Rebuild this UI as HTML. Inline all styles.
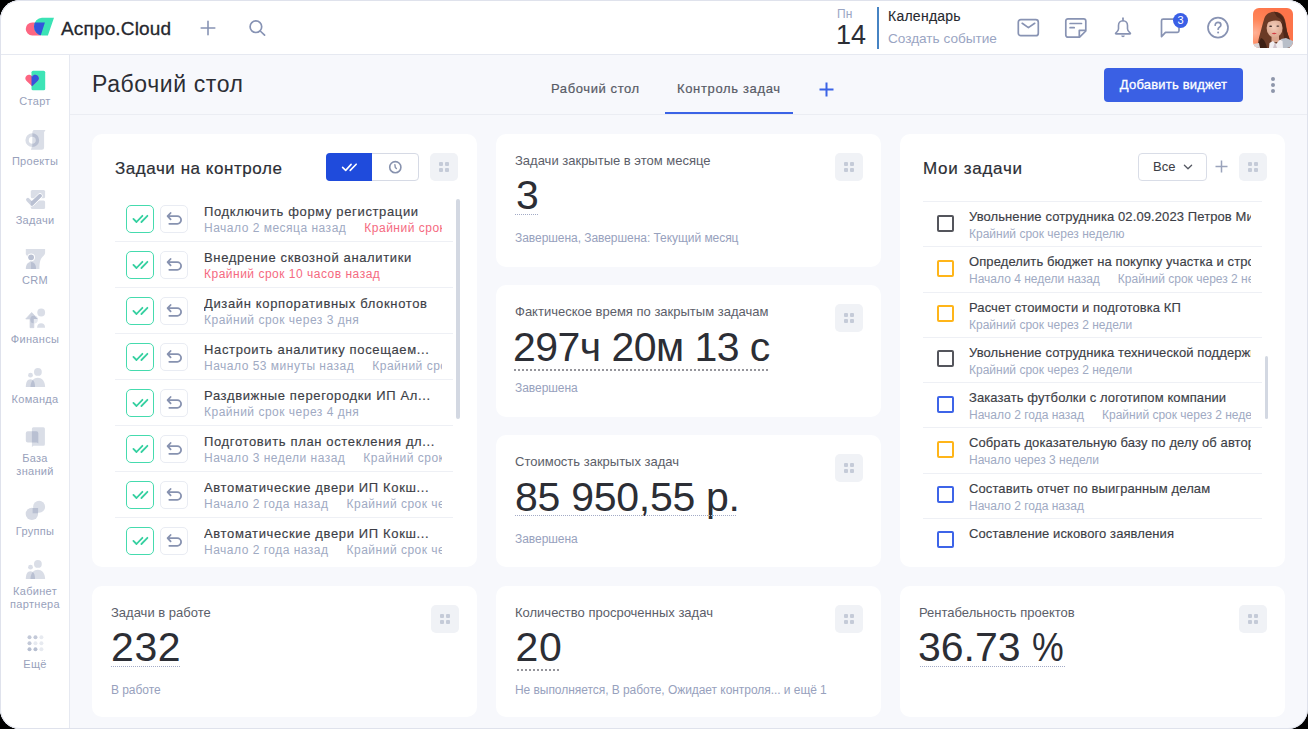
<!DOCTYPE html>
<html><head><meta charset="utf-8"><title>Аспро.Cloud</title><style>
*{box-sizing:border-box;margin:0;padding:0}
html,body{width:1308px;height:729px;overflow:hidden;background:#000;font-family:"Liberation Sans", sans-serif}
.win{position:absolute;left:0;top:0;width:1308px;height:729px;border-radius:20px;overflow:hidden;background:#f7f8fc}
.frame{position:absolute;left:0;top:0;width:1308px;height:729px;border-radius:20px;border:1px solid #dfe2ec;pointer-events:none;z-index:50}
.a{position:absolute;white-space:nowrap}
.hdr{position:absolute;left:0;top:0;width:1308px;height:55px;background:#fff;border-bottom:1px solid #e6e9f1}
.side{position:absolute;left:0;top:55px;width:70px;height:674px;background:#fff;border-right:1px solid #e6e9f1}
.sl{position:absolute;left:0.5px;width:69px;text-align:center;letter-spacing:0.3px;font-size:11px;line-height:14px;color:#98a1bb}
.card{position:absolute;background:#fff;border-radius:10px}
.hd{position:absolute;width:28px;height:28px;border-radius:5px;background:#f0f2f6}
.hd i{position:absolute;width:4px;height:4px;border-radius:1px;background:#c5cbd8}
.ctitle{font-size:13px;color:#5b5e69;line-height:16px}
.big{font-size:41px;color:#2c2e35;line-height:44px}
.dotl{position:absolute;height:1px;background:repeating-linear-gradient(90deg,#a3abc6 0 1px,transparent 1px 2px)}
.dotd{position:absolute;height:2px;background:repeating-linear-gradient(90deg,#96969c 0 2px,transparent 2px 4px)}
.csub{font-size:12px;color:#97a1bd;line-height:15px;letter-spacing:-0.05px}
.row{position:absolute;left:115px;width:338px;height:46px;border-bottom:1px solid #eef0f5}
.bok{position:absolute;left:11px;top:9px;width:28px;height:28px;border:1.5px solid #45dbae;border-radius:5px}
.bun{position:absolute;left:45px;top:9px;width:28px;height:28px;border:1px solid #e9ecf3;border-radius:5px}
.tt{position:absolute;left:89px;top:7.6px;width:240px;overflow:hidden;font-size:13px;letter-spacing:0.64px;line-height:16px;color:#3c3e46;-webkit-text-stroke:0.15px #3c3e46}
.ts{position:absolute;left:89px;top:25px;width:238px;overflow:hidden;font-size:12px;letter-spacing:0.5px;line-height:15px;color:#a0aac3}
.red{color:#f56a81}
.mrow{position:absolute;left:923px;width:339px;height:45.5px;border-top:1px solid #eef0f5}
.cb{position:absolute;left:13.5px;top:12.6px;width:17px;height:17px;border:2px solid #54555c;border-radius:2px}
.mt{position:absolute;left:46px;top:7px;width:282px;overflow:hidden;font-size:13px;letter-spacing:0.1px;line-height:16px;color:#3c3e46;-webkit-text-stroke:0.15px #3c3e46}
.ms{position:absolute;left:46px;top:25px;width:282px;overflow:hidden;font-size:12px;line-height:15px;color:#a0aac3}
</style></head>
<body>
<div class="win">
<div class="hdr"></div>
<svg class="a" style="left:22px;top:14px" width="36" height="26" viewBox="0 0 36 26">
<defs><clipPath id="lg"><path d="M20 3.75 H32 L25.9 21.4 H20 A8 8.825 0 0 1 20 3.75Z"/></clipPath></defs>
<path d="M10.25 8.4 H22.9 L18.75 21.4 H10.25 A6.5 6.5 0 0 1 10.25 8.4Z" fill="#fd6682"/>
<path d="M20 3.75 H32 L25.9 21.4 H20 A8 8.825 0 0 1 20 3.75Z" fill="#3be3b5"/>
<path d="M10.25 8.4 H22.9 L18.75 21.4 H10.25 A6.5 6.5 0 0 1 10.25 8.4Z" fill="#3355dc" clip-path="url(#lg)"/>
</svg>
<div class="a" style="left:61px;top:18px;font-size:19px;line-height:22px;letter-spacing:0.15px;color:#26282e;-webkit-text-stroke:0.3px #26282e">Аспро.Cloud</div>
<svg class="a" style="left:200px;top:20px" width="16" height="16" viewBox="0 0 16 16"><path d="M8 1.2V14.8M1.2 8H14.8" stroke="#8793b4" stroke-width="1.6" stroke-linecap="round"/></svg>
<svg class="a" style="left:247px;top:18px" width="20" height="20" viewBox="0 0 20 20"><circle cx="8.9" cy="8.7" r="5.8" fill="none" stroke="#8793b4" stroke-width="1.7"/><path d="M13.2 13 L17.6 17.2" stroke="#8793b4" stroke-width="1.7" stroke-linecap="round"/></svg>
<div class="a" style="left:837px;top:6.5px;font-size:12px;line-height:14px;color:#9aa5c3">Пн</div>
<div class="a" style="left:836px;top:19.2px;font-size:27px;line-height:32px;color:#2c2e35">14</div>
<div class="a" style="left:877px;top:7px;width:2px;height:41.5px;background:#4683c3"></div>
<div class="a" style="left:888px;top:8.4px;font-size:14px;line-height:17px;letter-spacing:0.25px;color:#26282e;-webkit-text-stroke:0.1px #26282e">Календарь</div>
<div class="a" style="left:888px;top:29.6px;font-size:13.6px;line-height:17px;color:#9aa5c3">Создать событие</div>
<svg class="a" style="left:1016px;top:17px" width="24" height="21" viewBox="0 0 24 21"><rect x="2.3" y="2.7" width="20" height="16" rx="2.5" fill="none" stroke="#8893b3" stroke-width="1.7"/><path d="M6.2 6.3 L12.4 10.6 L18.7 6.3" fill="none" stroke="#8893b3" stroke-width="1.7" stroke-linecap="round" stroke-linejoin="round"/></svg>
<svg class="a" style="left:1064px;top:17px" width="24" height="22" viewBox="0 0 24 22"><path d="M15.6 20.2 H4 A2.2 2.2 0 0 1 1.8 18 V4 A2.2 2.2 0 0 1 4 1.8 H19.6 A2.2 2.2 0 0 1 21.8 4 V14 Z" fill="none" stroke="#8893b3" stroke-width="1.7" stroke-linejoin="round"/><path d="M15.3 20 V13.4 H21.6" fill="none" stroke="#8893b3" stroke-width="1.7" stroke-linejoin="round"/><path d="M6.1 6.5 H17.5 M6.1 10.7 H10.2" stroke="#8893b3" stroke-width="1.7" stroke-linecap="round"/></svg>
<svg class="a" style="left:1113px;top:16px" width="20" height="24" viewBox="0 0 20 24"><path d="M10 4.8 C7.3 4.8 5.5 6.8 5.5 9.4 V12.8 C5.5 14 4.8 15 4 15.8 L2.8 17 C2.3 17.5 2.6 17.9 3.2 17.9 H16.8 C17.4 17.9 17.7 17.5 17.2 17 L16 15.8 C15.2 15 14.5 14 14.5 12.8 V9.4 C14.5 6.8 12.7 4.8 10 4.8Z" fill="none" stroke="#8893b3" stroke-width="1.6" stroke-linejoin="round"/><path d="M10 2.2 V4.6" stroke="#8893b3" stroke-width="1.7" stroke-linecap="round"/><path d="M8.2 19.4 A1.8 1.8 0 0 0 11.8 19.4Z" fill="#8893b3"/></svg>
<svg class="a" style="left:1158px;top:16px" width="26" height="24" viewBox="0 0 26 24"><path d="M3.5 20.6 V4.8 Q3.5 3.2 5.1 3.2 H21 V14.8 Q21 16.4 19.4 16.4 H7.5 Z" fill="none" stroke="#8893b3" stroke-width="1.7" stroke-linejoin="round"/></svg>
<div class="a" style="left:1173px;top:12.5px;width:15px;height:15px;border-radius:8px;background:#3a5fe6;color:#fff;font-size:11px;line-height:15px;text-align:center">3</div>
<svg class="a" style="left:1206px;top:16px" width="24" height="24" viewBox="0 0 24 24"><circle cx="12" cy="11.6" r="10" fill="none" stroke="#8893b3" stroke-width="1.7"/><path d="M9.2 9.2 C9.2 7.4 10.4 6.4 12 6.4 C13.7 6.4 14.9 7.5 14.9 9 C14.9 11 12.1 11.2 12.1 13.2" fill="none" stroke="#8893b3" stroke-width="1.7" stroke-linecap="round"/><circle cx="12.1" cy="16.6" r="1" fill="#8893b3"/></svg>
<svg class="a" style="left:1253px;top:8px" width="40" height="40" viewBox="0 0 40 40">
<defs><clipPath id="av"><rect width="40" height="40" rx="6"/></clipPath>
<radialGradient id="ag" cx="0.05" cy="0.62" r="0.75"><stop offset="0" stop-color="#ffb095"/><stop offset="0.45" stop-color="#ff8558"/><stop offset="1" stop-color="#fd744a"/></radialGradient>
<radialGradient id="sk" cx="0.45" cy="0.45" r="0.6"><stop offset="0" stop-color="#f3cdbb"/><stop offset="1" stop-color="#d9a48c"/></radialGradient></defs>
<g clip-path="url(#av)">
<rect width="40" height="40" fill="url(#ag)"/>
<path d="M21 3.8 C15 3.8 12 7.5 11 11.5 C9.5 16 8.5 21 7 26 C5.5 31 4.5 36 5 40 H38 C38 35 37 31 35 27 C33.5 23 33.5 17 32 12 C30.5 7 27 3.8 21 3.8Z" fill="#6b3a26"/>
<path d="M21 3.8 C25 4 29 6.5 31 11 C33 16 33 22 35.5 28 C37 32 38 36 38 40 H31 C32 33 31 26 29 20 C27.5 14 24 9 21 3.8Z" fill="#4e2719"/>
<path d="M8 30 C6 33 5 37 5.5 40 H14 C13 35 11 31 8 30Z" fill="#3d1f14"/>
<path d="M28 31 L33 30 L40 33 V40 H29Z" fill="#b9bfc9"/>
<path d="M18.5 27 H26 V34 H18.5Z" fill="#d9a48c"/><path d="M16.5 35 L20 33 L23 36 L27 31.5 L29.5 33 L30 40 H16Z" fill="#f1eef1"/>
<path d="M22 34 L24 40 H20Z" fill="#cfc3cc"/>
<path d="M0 36 L6 35 L7 40 H0Z" fill="#d9d4d6"/>
<ellipse cx="21.6" cy="20" rx="8" ry="9.6" fill="url(#sk)"/>
<path d="M14 14.5 C15.5 9.5 20 8 24 9 C27 10 29 12 30 15 C27 12 21 11.5 14 14.5Z" fill="#6b3a26"/>
<ellipse cx="17.6" cy="18.3" rx="1.5" ry="0.7" fill="#3a2a28"/>
<ellipse cx="24.8" cy="18.1" rx="1.5" ry="0.7" fill="#3a2a28"/>
<path d="M18.6 25.2 Q21.2 24.4 23.8 25.2 Q21.2 27.2 18.6 25.2Z" fill="#d43a43"/>
</g></svg>
<div class="side"></div>
<div class="sl" style="top:93.9px;line-height:14px">Старт</div>
<div class="sl" style="top:153.7px;line-height:14px">Проекты</div>
<div class="sl" style="top:213.3px;line-height:14px">Задачи</div>
<div class="sl" style="top:272.9px;line-height:14px">CRM</div>
<div class="sl" style="top:332.3px;line-height:14px">Финансы</div>
<div class="sl" style="top:391.6px;line-height:14px">Команда</div>
<div class="sl" style="top:451.8px;line-height:13.5px">База<br>знаний</div>
<div class="sl" style="top:524.4px;line-height:14px">Группы</div>
<div class="sl" style="top:584.6px;line-height:13.5px">Кабинет<br>партнера</div>
<div class="sl" style="top:656.9px;line-height:14px">Ещё</div>
<svg class="a" style="left:24px;top:69px" width="24" height="24" viewBox="0 0 24 24">
<defs><clipPath id="sc"><rect x="7.5" y="0" width="16" height="24"/></clipPath></defs>
<rect x="7.5" y="1.7" width="13.7" height="19.6" rx="1.6" fill="#3de4b6"/>
<path d="M8.1 17.2 L2.35 11.85 A3.6 3.6 0 1 1 8.1 7.65 A3.6 3.6 0 1 1 13.85 11.85 Z" fill="#fd6682"/>
<path d="M8.1 17.2 L2.35 11.85 A3.6 3.6 0 1 1 8.1 7.65 A3.6 3.6 0 1 1 13.85 11.85 Z" fill="#3355dc" clip-path="url(#sc)"/>
</svg>
<svg class="a" style="left:24px;top:128px" width="24" height="24" viewBox="0 0 24 24">
<path d="M9.6 2.1 H21.5 L20.1 4.2 V19.2 Q20.1 21.7 17.6 21.7 H6.9 Q8.3 19 8.3 12.2 V5 Q8.3 3 9.6 2.1Z" fill="#dadee7"/>
<path d="M8.3 7 A5.2 5.2 0 0 0 8.3 17.4" fill="none" stroke="#dadee7" stroke-width="3.4"/>
<path d="M8.3 7 A5.2 5.2 0 0 1 8.3 17.4" fill="none" stroke="#b9c0d2" stroke-width="3.4"/>
</svg>
<svg class="a" style="left:24px;top:188px" width="24" height="24" viewBox="0 0 24 24">
<defs><clipPath id="tc"><rect x="6.8" y="0" width="16" height="24"/></clipPath></defs>
<rect x="6.8" y="1.9" width="14.3" height="8.3" rx="1.5" fill="#dadee7"/>
<rect x="6.8" y="12.6" width="14.3" height="8.3" rx="1.5" fill="#dadee7"/>
<path d="M3.9 11.7 L7.7 15.9 L16 7.8" fill="none" stroke="#fff" stroke-width="5.2" stroke-linecap="round" stroke-linejoin="round" clip-path="url(#tc)"/>
<path d="M3.9 11.7 L7.7 15.9 L16 7.8" fill="none" stroke="#cfd4e0" stroke-width="3.6" stroke-linecap="round" stroke-linejoin="round"/>
<path d="M3.9 11.7 L7.7 15.9 L16 7.8" fill="none" stroke="#b9c0d2" stroke-width="3.6" stroke-linecap="round" stroke-linejoin="round" clip-path="url(#tc)"/>
</svg>
<svg class="a" style="left:24px;top:247px" width="24" height="24" viewBox="0 0 24 24">
<defs><clipPath id="cc"><rect x="7" y="0" width="16" height="24"/></clipPath></defs>
<path d="M1.8 1.9 H21.1 V5.5 C21.1 8.5 17.5 10 16.5 13 C15.6 15.5 15.4 18.5 15.4 21.9 H6 V16 C6 12 3 9 1.8 7.2 Z" fill="#dadee7"/>
<circle cx="7.1" cy="10.3" r="3.9" fill="#fff"/>
<circle cx="7.1" cy="10.3" r="2.9" fill="#b9c0d2"/>
<path d="M1.8 21.9 C1.8 17.5 4 15.1 6.9 15.1 C9.8 15.1 12 17.5 12 21.9 Z" fill="#cfd4e0"/>
<path d="M1.8 21.9 C1.8 17.5 4 15.1 6.9 15.1 C9.8 15.1 12 17.5 12 21.9 Z" fill="#b9c0d2" clip-path="url(#cc)"/>
</svg>
<svg class="a" style="left:24px;top:306px" width="24" height="24" viewBox="0 0 24 24">
<defs><clipPath id="fc"><path d="M7.7 6.5 L1.8 12.9 H6.1 V21.7 H9.8 V12.9 H13.7 Z"/></clipPath></defs>
<circle cx="17.2" cy="6.5" r="3.9" fill="#dadee7"/>
<path d="M13.1 21.7 C13.1 18.5 14.8 17.2 17.1 17.2 C19.4 17.2 21.1 18.5 21.1 21.7Z" fill="#dadee7"/>
<path d="M7.7 6.5 L1.8 12.9 H6.1 V21.7 H9.8 V12.9 H13.7 Z" fill="#cfd4e0" stroke="#cfd4e0" stroke-width="0.8" stroke-linejoin="round"/>
<circle cx="10" cy="13.5" r="3.9" fill="#e6e9f0"/>
<circle cx="10" cy="13.5" r="3.9" fill="#b9c0d2" clip-path="url(#fc)"/>
</svg>
<svg class="a" style="left:24px;top:366px" width="24" height="24" viewBox="0 0 24 24">
<defs><clipPath id="t1c"><path d="M1.8 21.1 C1.8 16 3.5 13.3 6.4 13.3 C9.3 13.3 11 16 11 21.1Z"/></clipPath></defs>
<circle cx="13.9" cy="5.9" r="3.9" fill="#dadee7"/>
<circle cx="6.5" cy="9.2" r="2.4" fill="#dadee7"/>
<path d="M6.5 21.1 C6.5 15 10 11.8 13.8 11.8 C17.6 11.8 21.1 15 21.1 21.1Z" fill="#dadee7"/>
<path d="M1.8 21.1 C1.8 16 3.5 13.3 6.4 13.3 C9.3 13.3 11 16 11 21.1Z" fill="#d6dae4"/>
<path d="M6.5 21.1 C6.5 15 10 11.8 13.8 11.8 C17.6 11.8 21.1 15 21.1 21.1Z" fill="#b9c0d2" clip-path="url(#t1c)"/>
</svg>
<svg class="a" style="left:24px;top:425px" width="24" height="24" viewBox="0 0 24 24">
<path d="M9.4 2.3 H19.4 A1.5 1.5 0 0 1 20.9 3.8 V19.2 A1.5 1.5 0 0 1 19.4 20.7 H9.5 L7.9 22 V3.8 A1.5 1.5 0 0 1 9.4 2.3Z" fill="#dadee7"/>
<path d="M3.8 6.3 H12.3 A2 2 0 0 1 14.3 8.3 V18.6 L13 17.6 H3.8 A2 2 0 0 1 1.8 15.6 V8.3 A2 2 0 0 1 3.8 6.3Z" fill="#d6dae4"/>
<path d="M7.9 6.3 H12.3 A2 2 0 0 1 14.3 8.3 V18.6 L13 17.6 H7.9Z" fill="#b9c0d2"/>
</svg>
<svg class="a" style="left:24px;top:498px" width="24" height="24" viewBox="0 0 24 24">
<circle cx="15.1" cy="8.7" r="6" fill="#dadee7"/>
<circle cx="7.9" cy="15.9" r="6.2" fill="#d6dae4"/>
<rect x="8.6" y="10" width="5.5" height="5.3" fill="#b9c0d2"/>
</svg>
<svg class="a" style="left:24px;top:558px" width="24" height="24" viewBox="0 0 24 24">
<defs><clipPath id="t2c"><path d="M1.8 21.1 C1.8 16 3.5 13.3 6.4 13.3 C9.3 13.3 11 16 11 21.1Z"/></clipPath></defs>
<circle cx="13.9" cy="5.9" r="3.9" fill="#dadee7"/>
<circle cx="6.5" cy="9.2" r="2.4" fill="#dadee7"/>
<path d="M6.5 21.1 C6.5 15 10 11.8 13.8 11.8 C17.6 11.8 21.1 15 21.1 21.1Z" fill="#dadee7"/>
<path d="M1.8 21.1 C1.8 16 3.5 13.3 6.4 13.3 C9.3 13.3 11 16 11 21.1Z" fill="#d6dae4"/>
<path d="M6.5 21.1 C6.5 15 10 11.8 13.8 11.8 C17.6 11.8 21.1 15 21.1 21.1Z" fill="#b9c0d2" clip-path="url(#t2c)"/>
</svg>
<svg class="a" style="left:24px;top:631px" width="24" height="24" viewBox="0 0 24 24"><circle cx="5.5" cy="6.3" r="2" fill="#c3c9d8"/><circle cx="11.45" cy="6.3" r="2" fill="#c3c9d8"/><circle cx="17.4" cy="6.3" r="2" fill="#e7eaf0"/><circle cx="5.5" cy="12.25" r="2" fill="#c3c9d8"/><circle cx="11.45" cy="12.25" r="2" fill="#e7eaf0"/><circle cx="17.4" cy="12.25" r="2" fill="#e7eaf0"/><circle cx="5.5" cy="18.2" r="2" fill="#b7bfd1"/><circle cx="11.45" cy="18.2" r="2" fill="#b7bfd1"/><circle cx="17.4" cy="18.2" r="2" fill="#e7eaf0"/></svg>
<div class="a" style="left:92px;top:71.3px;font-size:23px;line-height:26px;letter-spacing:0.6px;color:#2c2e35">Рабочий стол</div>
<div class="a" style="left:70px;top:114px;width:1237px;height:1px;background:#ebedf3"></div>
<div class="a" style="left:551px;top:80.7px;letter-spacing:0.6px;font-size:13px;line-height:16px;color:#585b66;-webkit-text-stroke:0.2px #585b66">Рабочий стол</div>
<div class="a" style="left:677px;top:80.7px;letter-spacing:0.65px;font-size:13px;line-height:16px;color:#585b66;-webkit-text-stroke:0.2px #585b66">Контроль задач</div>
<div class="a" style="left:665px;top:112px;width:128px;height:2px;background:#3b63e6"></div>
<svg class="a" style="left:818px;top:81px" width="17" height="17" viewBox="0 0 17 17"><path d="M8.5 1.5V15.5M1.5 8.5H15.5" stroke="#3b63e6" stroke-width="2"/></svg>
<div class="a" style="left:1104px;top:67.5px;width:139px;height:34px;border-radius:4px;background:#3a60e4;color:#fff;font-size:13px;line-height:34px;text-align:center;-webkit-text-stroke:0.3px #fff;letter-spacing:0.2px">Добавить виджет</div>
<div class="a" style="left:1271px;top:77px;width:4px;height:4px;border-radius:2px;background:#8e97ab"></div>
<div class="a" style="left:1271px;top:83px;width:4px;height:4px;border-radius:2px;background:#8e97ab"></div>
<div class="a" style="left:1271px;top:89px;width:4px;height:4px;border-radius:2px;background:#8e97ab"></div>
<div class="card" style="left:92px;top:134px;width:385px;height:433px"></div>
<div class="a" style="left:115px;top:158.8px;font-size:17px;letter-spacing:0.55px;line-height:20px;color:#2c2e35;-webkit-text-stroke:0.2px #2c2e35">Задачи на контроле</div>
<div class="a" style="left:326px;top:153px;width:93px;height:28px;border:1px solid #d6dae5;border-radius:4px;background:#fff"></div>
<div class="a" style="left:326px;top:153px;width:46px;height:28px;border-radius:4px 0 0 4px;background:#1f4bdc"></div>
<svg class="a" style="left:340px;top:160px" width="18" height="14" viewBox="0 0 18 14"><path d="M2.6 7.4 L5.7 10.4 L11.1 4.4 M10.2 10.4 L16.2 4.2" fill="none" stroke="#fff" stroke-width="1.6" stroke-linecap="round" stroke-linejoin="round"/></svg>
<svg class="a" style="left:387px;top:159px" width="17" height="17" viewBox="0 0 17 17"><circle cx="8.3" cy="8.2" r="5.6" fill="none" stroke="#8792ae" stroke-width="1.6"/><path d="M7.9 5.7 L8.3 8.5 L9.4 9.6" fill="none" stroke="#8792ae" stroke-width="1.4" stroke-linecap="round"/></svg>
<div class="hd" style="left:430px;top:153px"><i style="left:9px;top:9px"></i><i style="left:15px;top:9px"></i><i style="left:9px;top:15px"></i><i style="left:15px;top:15px"></i></div>
<div class="a" style="left:115px;top:196px;width:345px;height:367px;overflow:hidden">
<div class="row" style="left:0;top:0px"><div class="bok"><svg style="position:absolute;left:-1.5px;top:-1.5px" width="28" height="28" viewBox="0 0 28 28"><path d="M7.4 13.9 L10.5 17 L16.4 10.8 M15.4 17 L21.4 10.8" fill="none" stroke="#35d0a0" stroke-width="1.8" stroke-linecap="round" stroke-linejoin="round"/></svg></div><div class="bun"><svg style="position:absolute;left:-1px;top:-1px" width="28" height="28" viewBox="0 0 28 28"><path d="M10.6 8 L7.6 11.2 L10.6 14.4 M7.8 11.2 H17.3 A3.8 3.8 0 0 1 17.3 18.8 H9.3" fill="none" stroke="#8792b0" stroke-width="1.8" stroke-linecap="round" stroke-linejoin="round"/></svg></div><div class="tt">Подключить форму регистрации</div><div class="ts"><span>Начало 2 месяца назад</span><span class="red" style="margin-left:18px">Крайний срок через</span></div></div>
<div class="row" style="left:0;top:46px"><div class="bok"><svg style="position:absolute;left:-1.5px;top:-1.5px" width="28" height="28" viewBox="0 0 28 28"><path d="M7.4 13.9 L10.5 17 L16.4 10.8 M15.4 17 L21.4 10.8" fill="none" stroke="#35d0a0" stroke-width="1.8" stroke-linecap="round" stroke-linejoin="round"/></svg></div><div class="bun"><svg style="position:absolute;left:-1px;top:-1px" width="28" height="28" viewBox="0 0 28 28"><path d="M10.6 8 L7.6 11.2 L10.6 14.4 M7.8 11.2 H17.3 A3.8 3.8 0 0 1 17.3 18.8 H9.3" fill="none" stroke="#8792b0" stroke-width="1.8" stroke-linecap="round" stroke-linejoin="round"/></svg></div><div class="tt">Внедрение сквозной аналитики</div><div class="ts"><span class="red">Крайний срок 10 часов назад</span></div></div>
<div class="row" style="left:0;top:92px"><div class="bok"><svg style="position:absolute;left:-1.5px;top:-1.5px" width="28" height="28" viewBox="0 0 28 28"><path d="M7.4 13.9 L10.5 17 L16.4 10.8 M15.4 17 L21.4 10.8" fill="none" stroke="#35d0a0" stroke-width="1.8" stroke-linecap="round" stroke-linejoin="round"/></svg></div><div class="bun"><svg style="position:absolute;left:-1px;top:-1px" width="28" height="28" viewBox="0 0 28 28"><path d="M10.6 8 L7.6 11.2 L10.6 14.4 M7.8 11.2 H17.3 A3.8 3.8 0 0 1 17.3 18.8 H9.3" fill="none" stroke="#8792b0" stroke-width="1.8" stroke-linecap="round" stroke-linejoin="round"/></svg></div><div class="tt">Дизайн корпоративных блокнотов</div><div class="ts">Крайний срок через 3 дня</div></div>
<div class="row" style="left:0;top:138px"><div class="bok"><svg style="position:absolute;left:-1.5px;top:-1.5px" width="28" height="28" viewBox="0 0 28 28"><path d="M7.4 13.9 L10.5 17 L16.4 10.8 M15.4 17 L21.4 10.8" fill="none" stroke="#35d0a0" stroke-width="1.8" stroke-linecap="round" stroke-linejoin="round"/></svg></div><div class="bun"><svg style="position:absolute;left:-1px;top:-1px" width="28" height="28" viewBox="0 0 28 28"><path d="M10.6 8 L7.6 11.2 L10.6 14.4 M7.8 11.2 H17.3 A3.8 3.8 0 0 1 17.3 18.8 H9.3" fill="none" stroke="#8792b0" stroke-width="1.8" stroke-linecap="round" stroke-linejoin="round"/></svg></div><div class="tt">Настроить аналитику посещаем...</div><div class="ts"><span>Начало 53 минуты назад</span><span style="margin-left:18px">Крайний срок через</span></div></div>
<div class="row" style="left:0;top:184px"><div class="bok"><svg style="position:absolute;left:-1.5px;top:-1.5px" width="28" height="28" viewBox="0 0 28 28"><path d="M7.4 13.9 L10.5 17 L16.4 10.8 M15.4 17 L21.4 10.8" fill="none" stroke="#35d0a0" stroke-width="1.8" stroke-linecap="round" stroke-linejoin="round"/></svg></div><div class="bun"><svg style="position:absolute;left:-1px;top:-1px" width="28" height="28" viewBox="0 0 28 28"><path d="M10.6 8 L7.6 11.2 L10.6 14.4 M7.8 11.2 H17.3 A3.8 3.8 0 0 1 17.3 18.8 H9.3" fill="none" stroke="#8792b0" stroke-width="1.8" stroke-linecap="round" stroke-linejoin="round"/></svg></div><div class="tt">Раздвижные перегородки ИП Ал...</div><div class="ts">Крайний срок через 4 дня</div></div>
<div class="row" style="left:0;top:230px"><div class="bok"><svg style="position:absolute;left:-1.5px;top:-1.5px" width="28" height="28" viewBox="0 0 28 28"><path d="M7.4 13.9 L10.5 17 L16.4 10.8 M15.4 17 L21.4 10.8" fill="none" stroke="#35d0a0" stroke-width="1.8" stroke-linecap="round" stroke-linejoin="round"/></svg></div><div class="bun"><svg style="position:absolute;left:-1px;top:-1px" width="28" height="28" viewBox="0 0 28 28"><path d="M10.6 8 L7.6 11.2 L10.6 14.4 M7.8 11.2 H17.3 A3.8 3.8 0 0 1 17.3 18.8 H9.3" fill="none" stroke="#8792b0" stroke-width="1.8" stroke-linecap="round" stroke-linejoin="round"/></svg></div><div class="tt">Подготовить план остекления дл...</div><div class="ts"><span>Начало 3 недели назад</span><span style="margin-left:18px">Крайний срок через</span></div></div>
<div class="row" style="left:0;top:276px"><div class="bok"><svg style="position:absolute;left:-1.5px;top:-1.5px" width="28" height="28" viewBox="0 0 28 28"><path d="M7.4 13.9 L10.5 17 L16.4 10.8 M15.4 17 L21.4 10.8" fill="none" stroke="#35d0a0" stroke-width="1.8" stroke-linecap="round" stroke-linejoin="round"/></svg></div><div class="bun"><svg style="position:absolute;left:-1px;top:-1px" width="28" height="28" viewBox="0 0 28 28"><path d="M10.6 8 L7.6 11.2 L10.6 14.4 M7.8 11.2 H17.3 A3.8 3.8 0 0 1 17.3 18.8 H9.3" fill="none" stroke="#8792b0" stroke-width="1.8" stroke-linecap="round" stroke-linejoin="round"/></svg></div><div class="tt">Автоматические двери ИП Кокш...</div><div class="ts"><span>Начало 2 года назад</span><span style="margin-left:18px">Крайний срок через</span></div></div>
<div class="row" style="left:0;top:322px"><div class="bok"><svg style="position:absolute;left:-1.5px;top:-1.5px" width="28" height="28" viewBox="0 0 28 28"><path d="M7.4 13.9 L10.5 17 L16.4 10.8 M15.4 17 L21.4 10.8" fill="none" stroke="#35d0a0" stroke-width="1.8" stroke-linecap="round" stroke-linejoin="round"/></svg></div><div class="bun"><svg style="position:absolute;left:-1px;top:-1px" width="28" height="28" viewBox="0 0 28 28"><path d="M10.6 8 L7.6 11.2 L10.6 14.4 M7.8 11.2 H17.3 A3.8 3.8 0 0 1 17.3 18.8 H9.3" fill="none" stroke="#8792b0" stroke-width="1.8" stroke-linecap="round" stroke-linejoin="round"/></svg></div><div class="tt">Автоматические двери ИП Кокш...</div><div class="ts"><span>Начало 2 года назад</span><span style="margin-left:18px">Крайний срок через</span></div></div>
</div>
<div class="a" style="left:456px;top:199px;width:4px;height:220px;border-radius:2px;background:#d3d8e2"></div>
<div class="card" style="left:496px;top:134px;width:385px;height:132.5px"></div><div class="a ctitle" style="left:515px;top:153px">Задачи закрытые в этом месяце</div><div class="a big" style="left:516px;top:173.3px;letter-spacing:0px">3</div><div class="dotl" style="left:515px;top:214px;width:24px"></div><div class="a csub" style="left:515px;top:230.6px">Завершена, Завершена: Текущий месяц</div><div class="hd" style="left:835px;top:153px"><i style="left:9px;top:9px"></i><i style="left:15px;top:9px"></i><i style="left:9px;top:15px"></i><i style="left:15px;top:15px"></i></div>
<div class="card" style="left:496px;top:284.5px;width:385px;height:132px"></div><div class="a ctitle" style="left:515px;top:303.5px">Фактическое время по закрытым задачам</div><div class="a big" style="left:513px;top:324.8px;letter-spacing:-0.54px">297ч 20м 13 с</div><div class="dotd" style="left:514px;top:368.5px;width:256px"></div><div class="a csub" style="left:515px;top:381.1px">Завершена</div><div class="hd" style="left:835px;top:303.5px"><i style="left:9px;top:9px"></i><i style="left:15px;top:9px"></i><i style="left:9px;top:15px"></i><i style="left:15px;top:15px"></i></div>
<div class="card" style="left:496px;top:435px;width:385px;height:132px"></div><div class="a ctitle" style="left:515px;top:454px">Стоимость закрытых задач</div><div class="a big" style="left:515px;top:475.3px;letter-spacing:-0.27px">85 950,55 р.</div><div class="dotl" style="left:515px;top:515px;width:222px"></div><div class="a csub" style="left:515px;top:531.6px">Завершена</div><div class="hd" style="left:835px;top:454px"><i style="left:9px;top:9px"></i><i style="left:15px;top:9px"></i><i style="left:9px;top:15px"></i><i style="left:15px;top:15px"></i></div>
<div class="card" style="left:92px;top:586px;width:385px;height:131px"></div><div class="a ctitle" style="left:111px;top:605px">Задачи в работе</div><div class="a big" style="left:111px;top:625.3px;letter-spacing:0.6px">232</div><div class="dotl" style="left:111px;top:666px;width:69px"></div><div class="a csub" style="left:111px;top:682.6px">В работе</div><div class="hd" style="left:431px;top:605px"><i style="left:9px;top:9px"></i><i style="left:15px;top:9px"></i><i style="left:9px;top:15px"></i><i style="left:15px;top:15px"></i></div>
<div class="card" style="left:496px;top:586px;width:385px;height:131px"></div><div class="a ctitle" style="left:515px;top:605px">Количество просроченных задач</div><div class="a big" style="left:515.5px;top:625.3px;letter-spacing:0.8px">20</div><div class="dotd" style="left:517px;top:668.5px;width:42px"></div><div class="a csub" style="left:515px;top:682.6px">Не выполняется, В работе, Ожидает контроля... и ещё 1</div><div class="hd" style="left:835px;top:605px"><i style="left:9px;top:9px"></i><i style="left:15px;top:9px"></i><i style="left:9px;top:15px"></i><i style="left:15px;top:15px"></i></div>
<div class="card" style="left:900px;top:586px;width:385px;height:131px"></div><div class="a ctitle" style="left:919px;top:605px">Рентабельность проектов</div><div class="a big" style="left:918px;top:625.3px;letter-spacing:0px">36.73 <span style="display:inline-block;transform:scaleX(0.87);transform-origin:0 0">%</span></div><div class="dotl" style="left:920px;top:666px;width:145px"></div><div class="hd" style="left:1239px;top:605px"><i style="left:9px;top:9px"></i><i style="left:15px;top:9px"></i><i style="left:9px;top:15px"></i><i style="left:15px;top:15px"></i></div>
<div class="card" style="left:900px;top:134px;width:385px;height:433px"></div>
<div class="a" style="left:923px;top:158.8px;font-size:17px;letter-spacing:0.7px;line-height:20px;color:#2c2e35;-webkit-text-stroke:0.2px #2c2e35">Мои задачи</div>
<div class="a" style="left:1138px;top:153px;width:69px;height:28px;border:1px solid #d9dde7;border-radius:4px;background:#fff"></div>
<div class="a" style="left:1153px;top:159px;font-size:13px;line-height:16px;color:#3c3e46;-webkit-text-stroke:0.05px #3c3e46">Все</div>
<svg class="a" style="left:1182px;top:161px" width="12" height="12" viewBox="0 0 12 12"><path d="M2.4 4.3 L6 7.8 L9.6 4.3" fill="none" stroke="#555862" stroke-width="1.3" stroke-linecap="round" stroke-linejoin="round"/></svg>
<svg class="a" style="left:1214px;top:159px" width="15" height="15" viewBox="0 0 15 15"><path d="M7.5 1.5V13.5M1.5 7.5H13.5" stroke="#9aa3bb" stroke-width="1.5"/></svg>
<div class="hd" style="left:1239px;top:153px"><i style="left:9px;top:9px"></i><i style="left:15px;top:9px"></i><i style="left:9px;top:15px"></i><i style="left:15px;top:15px"></i></div>
<div class="a" style="left:923px;top:201px;width:345px;height:365px;overflow:hidden">
<div class="mrow" style="left:0;top:0.0px"><div class="cb" style="border-color:#54555c"></div><div class="mt">Увольнение сотрудника 02.09.2023 Петров Михаил</div><div class="ms">Крайний срок через неделю</div></div>
<div class="mrow" style="left:0;top:45.25px"><div class="cb" style="border-color:#ffb519"></div><div class="mt">Определить бюджет на покупку участка и строительство</div><div class="ms"><span>Начало 4 недели назад</span><span style="margin-left:18px">Крайний срок через 2 недели</span></div></div>
<div class="mrow" style="left:0;top:90.5px"><div class="cb" style="border-color:#ffb519"></div><div class="mt">Расчет стоимости и подготовка КП</div><div class="ms">Крайний срок через 2 недели</div></div>
<div class="mrow" style="left:0;top:135.75px"><div class="cb" style="border-color:#54555c"></div><div class="mt">Увольнение сотрудника технической поддержки</div><div class="ms">Крайний срок через 2 недели</div></div>
<div class="mrow" style="left:0;top:181.0px"><div class="cb" style="border-color:#3d64e8"></div><div class="mt">Заказать футболки с логотипом компании</div><div class="ms"><span>Начало 2 года назад</span><span style="margin-left:18px">Крайний срок через 2 недели</span></div></div>
<div class="mrow" style="left:0;top:226.25px"><div class="cb" style="border-color:#ffb519"></div><div class="mt">Собрать доказательную базу по делу об авторских</div><div class="ms">Начало через 3 недели</div></div>
<div class="mrow" style="left:0;top:271.5px"><div class="cb" style="border-color:#3d64e8"></div><div class="mt">Составить отчет по выигранным делам</div><div class="ms">Начало 2 года назад</div></div>
<div class="mrow" style="left:0;top:316.75px"><div class="cb" style="border-color:#3d64e8"></div><div class="mt">Составление искового заявления</div><div class="ms"></div></div>
</div>
<div class="a" style="left:1265px;top:356px;width:3px;height:63px;border-radius:2px;background:#d3d8e2"></div>
</div>
<div class="frame"></div>
</body></html>
